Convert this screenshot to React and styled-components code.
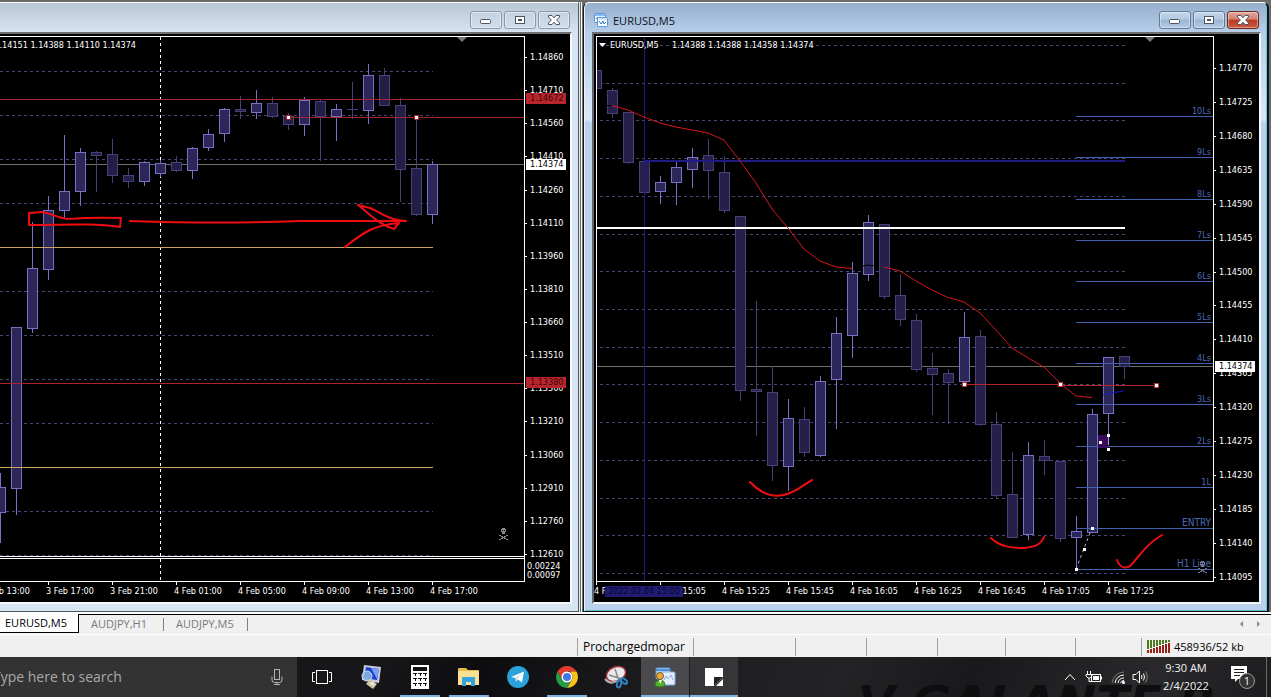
import React from 'react';
import styled, { createGlobalStyle, css } from 'styled-components';

const chartFont = '"DejaVu Sans Condensed", "DejaVu Sans", sans-serif';
const uiFont = '"Open Sans", "Noto Sans", sans-serif';

const GlobalStyle = createGlobalStyle`
  * { box-sizing: border-box; }
  body { margin: 0; background: #f0f0f0; font-family: ${uiFont}; }
  button, input { font: inherit; }
`;

const Page = styled.div`
  display: flex;
  flex-direction: column;
  min-height: 100vh;
`;

const Workspace = styled.main`
  display: grid;
  grid-template-columns: minmax(0, 583fr) minmax(0, 688fr);
  padding-top: 2px;
  border-bottom: 2px solid #fff;
  background: #6b6c69;
`;

const Frame = styled.section`
  display: flex;
  flex-direction: column;
  min-width: 0;
  border-top: 1px solid #fff;
  border-bottom: 1px solid ${p => (p.$active ? '#111' : '#50555c')};
  padding: ${p => (p.$active ? '0 6px 7px 8px' : '0 6px 7px 0')};
  background: ${p =>
    p.$active
      ? 'linear-gradient(#96afcc 0, #b7cfea 30px, #d9e8f7 116px, #b9d1ec 120px)'
      : 'linear-gradient(#b9c7d4 0, #d7e4f1 30px, #d7e4f2)'};
  ${p =>
    p.$active
      ? css`
          border-left: 1px solid #1a1a1a;
          border-right: 2px solid #111;
          border-radius: 6px 6px 0 0;
          box-shadow: inset 1px 0 #e8f2fb, inset -1px 0 #58cfe0, inset 0 -1px #58bfc8;
          margin-right: 2px;
        `
      : css`
          border-right: 1px solid #555a60;
          box-shadow: 1px 0 #e6e8ea, 2px 0 #666b70, 3px 0 #fff;
          margin-right: 4px;
        `}
`;

const TitleBar = styled.header`
  display: flex;
  align-items: flex-start;
  height: 29px;
  padding: 8px 2px 0;
  gap: 2px;
`;

const TitleText = styled.h1`
  flex: 1;
  display: flex;
  align-items: center;
  gap: 5px;
  margin: 0;
  height: 18px;
  font-size: 11px;
  font-weight: 400;
  color: #0a0f18;
`;

const WinButton = styled.button`
  display: flex;
  align-items: center;
  justify-content: center;
  width: 32px;
  height: 18px;
  padding: 0;
  border: 1px solid ${p => (p.$close ? '#6b2620' : p.$active ? '#637b96' : '#8b9aab')};
  border-radius: 3px;
  box-shadow: inset 0 0 0 1px rgba(255, 255, 255, 0.4);
  background: ${p =>
    p.$close
      ? 'linear-gradient(#e3a79b 0, #d4806f 45%, #bd3a21 50%, #cc5a3c)'
      : p.$active
      ? 'linear-gradient(#c3d6eb 0, #b2c9e3 45%, #9ab5d3 50%, #b3cce8)'
      : 'linear-gradient(#c6d4e2, #cfdcea)'};
`;

const ChartBody = styled.div`
  display: grid;
  grid-template-columns: minmax(0, 1fr) 45px;
  grid-template-rows: 546px 20px;
  padding: 2px 0 0 ${p => (p.$active ? '2px' : '0')};
  border-top: 2px solid #6d7073;
  border-right: 2px solid #f4f8fc;
  border-bottom: 2px solid #f4f8fc;
  border-left: ${p => (p.$active ? '2px solid #5f666e' : '0')};
  background: #000;
`;

const Plot = styled.div`
  border: 1px solid #fff;
  border-left-width: ${p => (p.$active ? '1px' : '0')};
  overflow: hidden;
  svg { display: block; width: 100%; height: 100%; }
`;

const PriceAxis = styled.div`
  position: relative;
  display: flex;
  flex-direction: column;
  padding-top: ${p => p.$top}px;
  font: 9px/11px ${chartFont};
  color: #fff;
`;

const PriceList = styled.ul`
  display: flex;
  flex-direction: column;
  justify-content: space-between;
  height: ${p => p.$height}px;
  flex: none;
  margin: 0;
  padding: 0;
  list-style: none;
`;

const Price = styled.li`
  display: flex;
  align-items: center;
  gap: 3px;
  &::before { content: ''; width: 2px; height: 1px; background: #fff; }
`;

const SubPrices = styled.div`
  padding: 2px 0 0 2px;
  line-height: 9px;
`;

const PriceTag = styled.div`
  position: absolute;
  left: 1px;
  top: ${p => p.$top}px;
  width: 40px;
  padding-left: 4px;
  background: ${p => (p.$alert ? '#b8252c' : '#fff')};
  color: ${p => (p.$alert ? '#3a0508' : '#000')};
`;

const TimeAxis = styled.div`
  position: relative;
  display: flex;
  overflow: hidden;
  margin-right: -45px;
  margin-left: ${p => (p.$active ? '-2px' : '0')};
  font: 9px/11px ${chartFont};
  color: #fff;
`;

const TimeRow = styled.div`
  display: flex;
  margin-left: ${p => (p.$active ? '0' : '-18px')};
`;

const TimeLabel = styled.span`
  position: relative;
  flex: none;
  width: 64px;
  padding-top: 4px;
  white-space: nowrap;
  &::before {
    content: '';
    position: absolute;
    left: 2px;
    top: 0;
    width: 1px;
    height: 3px;
    background: #fff;
  }
`;

const TimeTag = styled.span`
  position: absolute;
  left: 11px;
  top: 4px;
  width: 78px;
  text-align: center;
  white-space: nowrap;
  background: #211c72;
  color: #07062e;
`;

const TabStrip = styled.nav`
  display: flex;
  align-items: stretch;
  height: 19px;
  background: #f0f0f0;
`;

const Tab = styled.button`
  padding: 0 0 1px ${p => (p.$active ? 5 : 12)}px;
  border: 0;
  text-align: left;
  font-size: 11px;
  line-height: 16px;
  white-space: nowrap;
  ${p =>
    p.$active
      ? css`
          width: 79px;
          background: #fff;
          color: #000;
          border-right: 1px solid #000;
          border-bottom: 1px solid #000;
        `
      : css`
          width: ${p.$width}px;
          color: #77797b;
          background: linear-gradient(#808080, #808080) 100% 3px / 1px 13px no-repeat;
          border-top: 1px solid #000;
        `}
`;

const TabFill = styled.div`
  flex: 1;
  display: flex;
  justify-content: flex-end;
  align-items: center;
  gap: 12px;
  padding-right: 9px;
  border-top: 1px solid #000;
`;

const Arrow = styled.button`
  display: flex;
  padding: 0;
  border: 0;
  background: none;
`;

const StatusBar = styled.footer`
  display: grid;
  grid-template-columns: 577fr 116fr 102fr 71fr 71fr 68fr 70fr 66fr 130fr;
  align-items: center;
  height: 23px;
  margin-top: 1px;
  padding-top: 1px;
  border-top: 1px solid #fff;
  background: #f0f0f0;
  color: #000;
`;

const StatusCell = styled.div`
  min-width: 0;
  height: 18px;
  display: flex;
  align-items: center;
  gap: 3px;
  padding-left: 5px;
  white-space: nowrap;
  font-size: ${p => (p.$small ? 11 : 12)}px;
  border-left: ${p => (p.$first ? '0' : '1px solid #a0a0a0')};
`;

const Taskbar = styled.div`
  position: relative;
  display: flex;
  flex: 1 0 auto;
  min-height: 40px;
  overflow: hidden;
  background: linear-gradient(115deg, #17171a 30%, #0d0d0f 38%, #1d1d1f 52%, #232325 66%, #19191b 76%, #29292b 90%, #1d1d1f);
`;

const Wallpaper = styled.span`
  position: absolute;
  right: 56px;
  top: 22px;
  font: italic 700 48px/48px "DejaVu Sans", sans-serif;
  color: #0e0e10;
  white-space: nowrap;
`;

const Search = styled.label`
  display: flex;
  align-items: center;
  flex: none;
  width: 297px;
  padding-right: 14px;
  background: #333334;
`;

const SearchInput = styled.input`
  flex: 1;
  min-width: 0;
  margin-left: -7px;
  padding: 0;
  border: 0;
  outline: 0;
  background: none;
  color: #fff;
  font-size: 14px;
  line-height: 20px;
  &::placeholder { color: #a9a9a9; opacity: 1; }
`;

const Apps = styled.div`
  display: flex;
  flex: 1;
  padding-left: 1px;
`;

const AppButton = styled.button`
  position: relative;
  display: flex;
  align-items: center;
  justify-content: center;
  width: 48px;
  margin-right: 1px;
  padding: 0;
  border: 0;
  background: ${p => (p.$tone ? p.$tone : 'none')};
  ${p =>
    p.$open &&
    css`
      background-image: linear-gradient(#7fb2e0, #7fb2e0);
      background-size: ${p.$tone ? '100%' : '40px'} 2px;
      background-position: 50% 100%;
      background-repeat: no-repeat;
    `}
`;

const Tray = styled.div`
  position: relative;
  display: flex;
  align-items: center;
  color: #fff;
`;

const TrayButton = styled.button`
  display: flex;
  align-items: center;
  justify-content: center;
  width: ${p => p.$w}px;
  padding: 0;
  border: 0;
  background: none;
  color: #fff;
`;

const Clock = styled.time`
  display: block;
  margin: 0 8px 0 10px;
  width: 52px;
  text-align: center;
  white-space: nowrap;
  font-size: 11px;
  line-height: 18px;
  color: #f2f2f2;
`;

const ShowDesktop = styled.button`
  align-self: stretch;
  width: 5px;
  padding: 0;
  border: 0;
  border-left: 1px solid #6a6a6c;
  background: none;
`;

/* ---- chart data: [centre, high, body top, body bottom, low, rising] ---- */

const h4Candles = [
  [0, 473, 487, 513, 543, 1], [16, 327, 327, 489, 515, 1], [32, 222, 268, 329, 333, 1],
  [48, 196, 210, 270, 280, 1], [64, 135, 191, 211, 218, 1], [80, 148, 152, 192, 206, 1],
  [96, 151, 152, 156, 192, 0], [112, 139, 154, 176, 183, 0], [128, 168, 175, 182, 188, 0],
  [144, 161, 162, 182, 186, 1], [160, 160, 163, 174, 177, 1], [176, 156, 162, 171, 172, 0],
  [192, 147, 148, 171, 179, 1], [208, 129, 134, 148, 151, 1], [224, 108, 109, 134, 142, 1],
  [240, 96, 109, 112, 119, 0], [256, 90, 103, 113, 119, 1], [272, 97, 103, 117, 118, 0],
  [288, 113, 116, 125, 130, 0], [304, 97, 100, 125, 136, 1], [320, 100, 101, 117, 161, 0],
  [336, 104, 109, 117, 141, 1], [352, 82, 109, 110, 119, 0], [368, 64, 75, 111, 124, 1],
  [384, 68, 75, 106, 106, 0], [400, 98, 105, 170, 202, 0], [416, 118, 168, 215, 216, 0],
  [432, 161, 164, 215, 224, 1],
];

const m5Candles = [
  [596, 69, 70, 89, 103, 0], [612, 88, 90, 114, 118, 0], [628, 112, 112, 163, 164, 0],
  [644, 161, 161, 193, 193, 0], [660, 176, 182, 192, 204, 1], [676, 162, 167, 183, 205, 1],
  [692, 148, 157, 170, 188, 1], [708, 139, 155, 171, 199, 0], [724, 156, 172, 211, 213, 0],
  [740, 216, 216, 391, 401, 0], [756, 301, 389, 392, 436, 0], [772, 366, 392, 466, 481, 0],
  [788, 399, 418, 467, 491, 1], [804, 407, 419, 453, 457, 0], [820, 376, 381, 456, 457, 1],
  [836, 317, 333, 380, 429, 1], [852, 262, 273, 336, 358, 1], [868, 215, 222, 275, 281, 1],
  [884, 224, 224, 297, 299, 0], [900, 274, 295, 320, 326, 0], [916, 314, 320, 370, 372, 0],
  [932, 353, 368, 375, 415, 0], [948, 369, 373, 383, 424, 0], [964, 312, 337, 382, 383, 1],
  [980, 330, 336, 425, 426, 0], [996, 412, 424, 496, 498, 0], [1012, 452, 494, 538, 538, 0],
  [1028, 442, 455, 535, 540, 1], [1044, 440, 456, 461, 475, 0], [1060, 461, 461, 539, 542, 0],
  [1076, 516, 531, 538, 569, 1], [1092, 409, 414, 533, 533, 1], [1108, 357, 357, 414, 445, 1],
  [1124, 356, 356, 367, 379, 0],
];

const levels = [
  ['10Ls', 116], ['9Ls', 157], ['8Ls', 199], ['7Ls', 240], ['6Ls', 281], ['5Ls', 322],
  ['4Ls', 363], ['3Ls', 404], ['2Ls', 446], ['1L', 487], ['ENTRY', 528], ['H1 Line', 569],
];

const Candle = ({ d: [x, hi, top, bot, lo, up], bearFill }) => {
  const line = up ? '#7970c6' : '#47407a';
  return (
    <g shapeRendering="crispEdges">
      <rect x={x} y={hi} width="1" height={lo - hi} fill={line} />
      <rect x={x - 5} y={top} width="11" height={Math.max(1, bot - top)} fill={line} />
      {bot - top > 2 && (
        <rect x={x - 4} y={top + 1} width="9" height={bot - top - 2} fill={up ? '#2b2759' : bearFill} />
      )}
    </g>
  );
};

const HLine = ({ x = 0, to = 4000, y, c, h = 1 }) => (
  <rect x={x} y={y} width={to - x} height={h} fill={c} shapeRendering="crispEdges" />
);

const Dashes = ({ x, to, ys }) =>
  ys.map(y => (
    <path key={y} d={`M${x} ${y}.5H${to}`} stroke="#484674" strokeDasharray="3 3" shapeRendering="crispEdges" />
  ));

const Handle = ({ x, y, c }) => (
  <g shapeRendering="crispEdges">
    {c && <rect x={x - 2} y={y - 2} width="5" height="5" fill={c} />}
    <rect x={x - 1} y={y - 1} width="3" height="3" fill="#fff" />
  </g>
);

const Skull = ({ x, y, c = '#8a8a8a' }) => (
  <g transform={`translate(${x} ${y})`} fill={c} shapeRendering="crispEdges">
    <path d="M-1 -7H2V-6H3V-3H2V-1H-1V-3H-2V-6H-1Z" />
    <path d="M-1 -5H0V-4H-1ZM1 -5H2V-4H1Z" fill="#000" />
    <path d="M-4 0H-2V1H-4ZM3 0H5V1H3ZM-2 1H0V2H-2ZM1 1H3V2H1ZM-1 2H2V3H-1ZM-2 3H0V4H-2ZM1 3H3V4H1ZM-4 4H-2V5H-4ZM3 4H5V5H3Z" />
  </g>
);

const chartText = { fontFamily: chartFont, fontSize: 9, fill: '#fff' };

const LeftPlot = () => (
  <svg role="img" aria-label="EURUSD candlestick chart">
    <g transform="translate(0 -37)">
      <Dashes x={0} to={433} ys={[71, 115, 159, 203, 291, 335, 379, 423, 511, 555]} />
      <HLine y={164} c="#6c7068" />
      <path d="M160.500 37V581" stroke="#fff" strokeDasharray="3 3" shapeRendering="crispEdges" />
      {h4Candles.map(d => <Candle key={d[0]} d={d} bearFill="#211f46" />)}
      <HLine y={99} c="#a8242e" />
      <HLine x={288} y={117} c="#a8242e" />
      <HLine y={383} c="#a8242e" />
      <HLine y={247} to={433} c="#cba25e" />
      <HLine y={467} to={433} c="#cba25e" />
      <Handle x={288} y={117} c="#a02028" />
      <Handle x={416} y={117} c="#a02028" />
      <path d="M457 37H467L462 42Z" fill="#777" />
      <text x="136" y="48" textAnchor="end" {...chartText}>1.14151 1.14388 1.14110 1.14374</text>
      <Skull x={503} y={535} />
      <g fill="none" stroke="#f00d12" strokeWidth="2" strokeLinecap="round" strokeLinejoin="round">
        <path d="M29 213L42 212C50 213 58 218 68 219C80 218 90 217 121 218L120 227C100 224 85 224 29 225Z" />
        <path d="M130 221C190 223 250 223 300 221L406 221" />
        <path d="M406 221C390 221 380 212 370 208L358 205C370 214 378 224 394 229L399 223C375 225 365 231 345 247" />
      </g>
      <rect x="0" y="556" width="4000" height="3" fill="#000" />
      <HLine y={556} c="#fff" />
      <HLine y={558} c="#fff" />
    </g>
  </svg>
);

const RightPlot = () => (
  <svg role="img" aria-label="EURUSD five minute candlestick chart">
    <g transform="translate(-597 -37)">
      <Dashes x={600} to={1125} ys={[45, 83, 120, 158, 196, 234, 271, 309, 347, 384, 422, 460, 498, 535, 573]} />
      <HLine x={596} y={366} c="#6c7068" />
      {m5Candles.map(d => <Candle key={d[0]} d={d} bearFill="#261f4a" />)}
      <rect x="644" y="37" width="1" height="545" fill="#211a78" />
      <HLine x={644} to={1125} y={160} h={2} c="#1f1a86" />
      <HLine x={596} to={1125} y={227} h={2} c="#fff" />
      {levels.map(([name, y]) => (
        <g key={name}>
          <HLine x={1076} y={y} c="#4262b0" />
          <text x="1211" y={y - 2} textAnchor="end" fontFamily={chartFont} fontSize={name.length > 4 ? 10 : 9} fill="#4a69b8">
            {name}
          </text>
        </g>
      ))}
      <g fill="none" stroke="#d8161c" strokeWidth="1">
        <path d="M612 105.500L628 110L644 117L660 123L676 127L692 130L708 133L724 140L740 161L756 183L772 209L788 228L804 249L820 261L836 267L852 268.500" />
        <path d="M884 267L900 271L916 281L932 290L948 297.500L964 302L980 313L996 330L1012 348L1028 358L1044 367L1060 383L1076 396L1092 397.500" />
        <path d="M1103 395L1114 392.500L1124 391" stroke="#1a14c8" />
        <path d="M607 105.500H612M863 266L868 265L876 266" stroke="#000" />
      </g>
      <HLine x={964} to={1060} y={384} c="#b8242c" />
      <HLine x={1060} to={1156} y={385} c="#b8242c" />
      <Handle x={964} y={384} c="#c03038" />
      <Handle x={1060} y={384} c="#c03038" />
      <Handle x={1156} y={385} c="#c03038" />
      <rect x="1098" y="435" width="10" height="13" fill="#370a5c" />
      <rect x="1108" y="435" width="1" height="10" fill="#a9a4e8" />
      <Handle x={1108} y={435} />
      <Handle x={1108} y={449} />
      <Handle x={1100} y={442} />
      <path d="M1076 569L1092 528" stroke="#aaa8d8" strokeDasharray="3 3" />
      <Handle x={1076} y={569} />
      <Handle x={1084} y={549} />
      <Handle x={1092} y={528} />
      <path d="M1145 37H1155L1150 42Z" fill="#777" />
      <path d="M599 43H606L602.500 47Z" fill="#fff" />
      <text x="610" y="48" {...chartText}>EURUSD,M5</text>
      <text x="672" y="48" {...chartText}>1.14388 1.14388 1.14358 1.14374</text>
      <Skull x={1202} y={568} c="#6f7890" />
      <g fill="none" stroke="#f00d12" strokeWidth="2" strokeLinecap="round" strokeLinejoin="round">
        <path d="M750 482C764 497 778 498 790 493C802 488 806 483 812 480" />
        <path d="M991 538C1000 547 1012 548 1024 548C1034 547 1041 545 1044 537" />
        <path d="M1117 560C1120 568 1126 569 1130 566C1140 556 1146 544 1162 535" />
      </g>
    </g>
  </svg>
);

const MinGlyph = () => (
  <svg width="12" height="10"><rect x=".5" y="4.500" width="10" height="4" rx="1" fill="#fff" stroke="#4b5565" /></svg>
);
const MaxGlyph = () => (
  <svg width="12" height="10">
    <rect x="1.500" y="1.500" width="9" height="7" fill="#fff" stroke="#4b5565" />
    <rect x="4.500" y="4.500" width="3" height="1" fill="#9ab" stroke="#4b5565" />
  </svg>
);
const CloseGlyph = () => (
  <svg width="12" height="10">
    <path
      d="M.5 .5H4L6 2.800L8 .5H11.500V2L8.600 5L11.500 8V9.500H8L6 7.200L4 9.500H.5V8L3.400 5L.5 2Z"
      fill="#fff"
      stroke="#4b5565"
    />
  </svg>
);

const WinButtons = ({ active }) => (
  <>
    <WinButton $active={active} aria-label="Minimize"><MinGlyph /></WinButton>
    <WinButton $active={active} aria-label="Restore"><MaxGlyph /></WinButton>
    <WinButton $active={active} $close={active} aria-label="Close"><CloseGlyph /></WinButton>
  </>
);

const ChartIcon = () => (
  <svg width="14" height="14">
    <rect x=".5" y=".5" width="11" height="9" rx="1" fill="#e9f4ff" stroke="#5a94d8" />
    <path d="M1 2H11" stroke="#8fbdf0" strokeWidth="2" />
    <path d="M2 6L4 4L6 7" stroke="#4a84cc" fill="none" />
    <rect x="3.500" y="4.500" width="10" height="9" rx="1" fill="#fff" stroke="#5a94d8" />
    <path d="M4 6H13" stroke="#a9cef5" />
    <path d="M5 8L7 11L9 8L10 11L12 9" stroke="#3f7ac4" fill="none" />
  </svg>
);

const BarsIcon = () => (
  <svg width="24" height="13" shapeRendering="crispEdges">
    {[0, 1, 2, 3, 4, 5, 6, 7].map(i => (
      <g key={i}>
        <rect x={i * 3} y="0" width="2" height={9 - i} fill="#4f7a1c" />
        <rect x={i * 3} y={10 - i} width="2" height={3 + i} fill="#982218" />
      </g>
    ))}
  </svg>
);

const MicIcon = () => (
  <svg width="12" height="18" fill="none" stroke="#b4b4b4">
    <rect x="3.500" y="1.500" width="5" height="10" />
    <path d="M1 8.500V12Q1 14.500 3.500 14.500H8.500Q11 14.500 11 12V8.500M6 14.500V17M3 16.500H9" />
  </svg>
);

const TaskViewIcon = () => (
  <svg width="20" height="14" fill="none" stroke="#fff">
    <rect x="4.500" y=".5" width="11" height="13" />
    <path d="M3 2.500H.5V11.500H3M17 2.500H19.500V11.500H17" />
  </svg>
);

const RemoteIcon = () => (
  <svg width="24" height="26">
    <path d="M5 1L22 3L20 19L3 16Z" fill="#c9cdda" />
    <path d="M7 3L20 5L18 16L5 14Z" fill="#1b3fd0" />
    <path d="M12 4L20 5L18 15Z" fill="#7f9df4" />
    <circle cx="8" cy="12" r="5" fill="#86b4e8" opacity=".9" stroke="#dce9f8" />
    <path d="M11 15L18 20L14 25L7 20Z" fill="#cfc2a4" />
    <path d="M10 20L14 17L16 22Z" fill="#efe8d4" />
  </svg>
);

const CalcIcon = () => (
  <svg width="18" height="24" shapeRendering="crispEdges">
    <rect width="18" height="24" fill="#fff" />
    <rect x="2" y="2" width="14" height="4" fill="#111" />
    {[8, 13, 18].map(y => [2, 7, 12].map(x => (
      <path key={`${x}-${y}`} d={`M${x} ${y}h4v1h-1v2h-1v-2h-2z`} fill="#111" />
    )))}
  </svg>
);

const FolderIcon = () => (
  <svg width="24" height="22">
    <path d="M1 3Q1 2 2 2H9L11 4H21Q22 4 22 5V19H1Z" fill="#e9b94c" />
    <path d="M1 5H22V19H1Z" fill="#fbe192" />
    <path d="M5 12Q5 11 6 11H17Q18 11 18 12V20H14V16H9V20H5Z" fill="#36a3e0" />
  </svg>
);

const TelegramIcon = () => (
  <svg width="22" height="22">
    <circle cx="11" cy="11" r="11" fill="#2ba2dc" />
    <path d="M4 11L17 5.500L15 16.500L11 13.500L9 15.500L8.500 12Z" fill="#fff" />
    <path d="M8.500 12L14.500 8L10.500 13L9 15.500Z" fill="#bcdcf0" />
  </svg>
);

const ChromeIcon = () => (
  <svg width="22" height="22" viewBox="0 0 22 22">
    <path d="M1.500 5.500A11 11 0 0 1 20.500 5.500H11L6.200 13.700Z" fill="#e33b2e" />
    <path d="M20.500 5.500A11 11 0 0 1 11 22L15.800 13.700A5.500 5.500 0 0 0 15.800 8L14 5.500Z" fill="#fbc116" />
    <path d="M11 22A11 11 0 0 1 1.500 5.500L6.200 13.700A5.500 5.500 0 0 0 13.500 15.900L15.800 13.700Z" fill="#269b48" />
    <circle cx="11" cy="11" r="5.500" fill="#fff" />
    <circle cx="11" cy="11" r="4" fill="#3f78e0" />
  </svg>
);

const SnipIcon = () => (
  <svg width="24" height="24" fill="none">
    <ellipse cx="12" cy="9" rx="10" ry="7" transform="rotate(-22 12 9)" fill="#e9e9ec" stroke="#a4323a" strokeWidth="1.500" />
    <path d="M1 14Q6 20 13 16" stroke="#b0b0b4" strokeWidth="2" />
    <path d="M11 4L15 16M5 10L18 14" stroke="#888" strokeWidth="1.500" />
    <ellipse cx="15" cy="19" rx="2" ry="3.500" transform="rotate(15 15 19)" stroke="#2d82c0" strokeWidth="2" />
    <ellipse cx="20" cy="16" rx="2" ry="3.500" transform="rotate(-50 20 16)" stroke="#2d82c0" strokeWidth="2" />
  </svg>
);

const TerminalIcon = () => (
  <svg width="22" height="22">
    <rect x="2" y="2" width="14" height="11" rx="1" fill="#a8cdf0" stroke="#5f9ddb" />
    <path d="M2 4H16" stroke="#4f90d6" strokeWidth="2" />
    <rect x="7" y="6" width="14" height="13" rx="1" fill="#e3eefa" stroke="#7fb0e0" />
    <path d="M10 14L12 10L14 13L17 9L19 14" stroke="#8aaede" fill="none" />
    <circle cx="6" cy="10" r="3.500" fill="#e8a93c" stroke="#8c5c1c" />
    <path d="M1 20Q1 14 6 14Q11 14 11 20Q6 22 1 20Z" fill="#55b02e" stroke="#2f7a18" />
    <path d="M5 14L6 18L8 14Z" fill="#fff" />
  </svg>
);

const NoteIcon = () => (
  <svg width="18" height="18">
    <path d="M0 0H18V9L9 18H0Z" fill="#fff" />
    <path d="M9 18V9H18Z" fill="#222" />
    <path d="M11 18L18 11V18Z" fill="#fff" />
  </svg>
);

const apps = [
  { name: 'Task View', icon: <TaskViewIcon /> },
  { name: 'Remote Desktop', icon: <RemoteIcon /> },
  { name: 'Calculator', icon: <CalcIcon />, open: true },
  { name: 'File Explorer', icon: <FolderIcon />, open: true },
  { name: 'Telegram', icon: <TelegramIcon /> },
  { name: 'Chrome', icon: <ChromeIcon />, open: true },
  { name: 'Snipping Tool', icon: <SnipIcon /> },
  { name: 'Trading Terminal', icon: <TerminalIcon />, open: true, tone: '#4a4a4c' },
  { name: 'Notes', icon: <NoteIcon />, open: true, tone: '#363638' },
];

const leftPrices = ['1.14860', '1.14710', '1.14560', '1.14410', '1.14260', '1.14110', '1.13960', '1.13810', '1.13660', '1.13510', '1.13360', '1.13210', '1.13060', '1.12910', '1.12760', '1.12610'];
const rightPrices = ['1.14770', '1.14725', '1.14680', '1.14635', '1.14590', '1.14545', '1.14500', '1.14455', '1.14410', '1.14365', '1.14320', '1.14275', '1.14230', '1.14185', '1.14140', '1.14095'];
const leftTimes = ['3 Feb 13:00', '3 Feb 17:00', '3 Feb 21:00', '4 Feb 01:00', '4 Feb 05:00', '4 Feb 09:00', '4 Feb 13:00', '4 Feb 17:00'];
const rightTimes = ['4 Feb 14:45', '4 Feb 15:05', '4 Feb 15:25', '4 Feb 15:45', '4 Feb 16:05', '4 Feb 16:25', '4 Feb 16:45', '4 Feb 17:05', '4 Feb 17:25'];
const emptyCells = ['profile', 'time', 'open', 'high', 'low', 'close'];

export default function App() {
  return (
    <Page>
      <GlobalStyle />
      <Workspace>
        <Frame>
          <TitleBar>
            <TitleText />
            <WinButtons />
          </TitleBar>
          <ChartBody>
            <Plot><LeftPlot /></Plot>
            <PriceAxis $top={16}>
              <PriceList $height={508}>
                {leftPrices.map(p => <Price key={p}>{p}</Price>)}
              </PriceList>
              <SubPrices>
                <div>0.00224</div>
                <div>0.00097</div>
              </SubPrices>
              <PriceTag $top={57} $alert>1.14672</PriceTag>
              <PriceTag $top={123}>1.14374</PriceTag>
              <PriceTag $top={341} $alert>1.13380</PriceTag>
            </PriceAxis>
            <TimeAxis>
              <TimeRow>
                {leftTimes.map(t => <TimeLabel key={t}>{t}</TimeLabel>)}
              </TimeRow>
            </TimeAxis>
          </ChartBody>
        </Frame>
        <Frame $active>
          <TitleBar>
            <TitleText><ChartIcon />EURUSD,M5</TitleText>
            <WinButtons active />
          </TitleBar>
          <ChartBody $active>
            <Plot $active><RightPlot /></Plot>
            <PriceAxis $top={27}>
              <PriceList $height={520}>
                {rightPrices.map(p => <Price key={p}>{p}</Price>)}
              </PriceList>
              <PriceTag $top={325}>1.14374</PriceTag>
            </PriceAxis>
            <TimeAxis $active>
              <TimeRow $active>
                {rightTimes.map(t => <TimeLabel key={t}>{t}</TimeLabel>)}
              </TimeRow>
              <TimeTag>2022.02.04 15:00</TimeTag>
            </TimeAxis>
          </ChartBody>
        </Frame>
      </Workspace>
      <TabStrip>
        <Tab $active>EURUSD,M5</Tab>
        <Tab $width={85}>AUDJPY,H1</Tab>
        <Tab $width={84}>AUDJPY,M5</Tab>
        <TabFill>
          <Arrow aria-label="Scroll tabs left"><svg width="6" height="8"><path d="M5 1V7L2 4Z" fill="#8a8a8a" /></svg></Arrow>
          <Arrow aria-label="Scroll tabs right"><svg width="6" height="8"><path d="M1 1V7L4 4Z" fill="#8a8a8a" /></svg></Arrow>
        </TabFill>
      </TabStrip>
      <StatusBar>
        <StatusCell $first />
        <StatusCell>Prochargedmopar</StatusCell>
        {emptyCells.map(name => <StatusCell key={name} />)}
        <StatusCell $small><BarsIcon />458936/52 kb</StatusCell>
      </StatusBar>
      <Taskbar>
        <Wallpaper aria-hidden="true">V GALANTE B</Wallpaper>
        <Search>
          <SearchInput type="text" placeholder="Type here to search" aria-label="Type here to search" />
          <MicIcon />
        </Search>
        <Apps>
          {apps.map(a => (
            <AppButton key={a.name} aria-label={a.name} $open={a.open} $tone={a.tone}>{a.icon}</AppButton>
          ))}
        </Apps>
        <Tray>
          <TrayButton $w={24} aria-label="Show hidden icons">
            <svg width="12" height="8" fill="none" stroke="#fff"><path d="M1 7L6 1.500L11 7" /></svg>
          </TrayButton>
          <TrayButton $w={24} aria-label="Battery">
            <svg width="18" height="14" fill="none" stroke="#fff">
              <path d="M2.500 1V4M5.500 1V4M1 4.500H7V6L5 8H3L1 6ZM4 8V11.500H7" />
              <rect x="6.500" y="4.500" width="9" height="7" />
              <rect x="8" y="6" width="6" height="4" fill="#fff" stroke="none" />
              <path d="M16.500 6.500V9.500" />
            </svg>
          </TrayButton>
          <TrayButton $w={24} aria-label="Network">
            <svg width="14" height="14" fill="none">
              <path d="M1 13A12 12 0 0 1 13 2" stroke="#777" />
              <path d="M4 13A9 9 0 0 1 13 5M7 13A6 6 0 0 1 13 8M9.500 13A3.500 3.500 0 0 1 13 10.500" stroke="#fff" />
              <circle cx="12.500" cy="12.500" r="1.500" fill="#fff" />
            </svg>
          </TrayButton>
          <TrayButton $w={20} aria-label="Volume">
            <svg width="17" height="14" fill="none" stroke="#fff">
              <path d="M1 4.500H4L7.500 1V13L4 9.500H1Z" />
              <path d="M9.500 5Q10.500 7 9.500 9M11.500 3.500Q13.500 7 11.500 10.500" />
              <path d="M13.500 1.500Q17 7 13.500 12.500" stroke="#888" />
            </svg>
          </TrayButton>
          <Clock>9:30 AM<br />2/4/2022</Clock>
          <TrayButton $w={46} aria-label="Notifications">
            <svg width="26" height="26">
              <path d="M1 2H17V15H8L5 18V15H1Z" fill="#fff" />
              <path d="M4 5.500H14M4 8.500H14M4 11.500H10" stroke="#222" />
              <circle cx="17" cy="17" r="7.500" fill="#333" stroke="#9a9a9a" />
              <text x="17" y="21" textAnchor="middle" fontFamily={uiFont} fontSize="11" fill="#fff">1</text>
            </svg>
          </TrayButton>
          <ShowDesktop aria-label="Show desktop" />
        </Tray>
      </Taskbar>
    </Page>
  );
}
